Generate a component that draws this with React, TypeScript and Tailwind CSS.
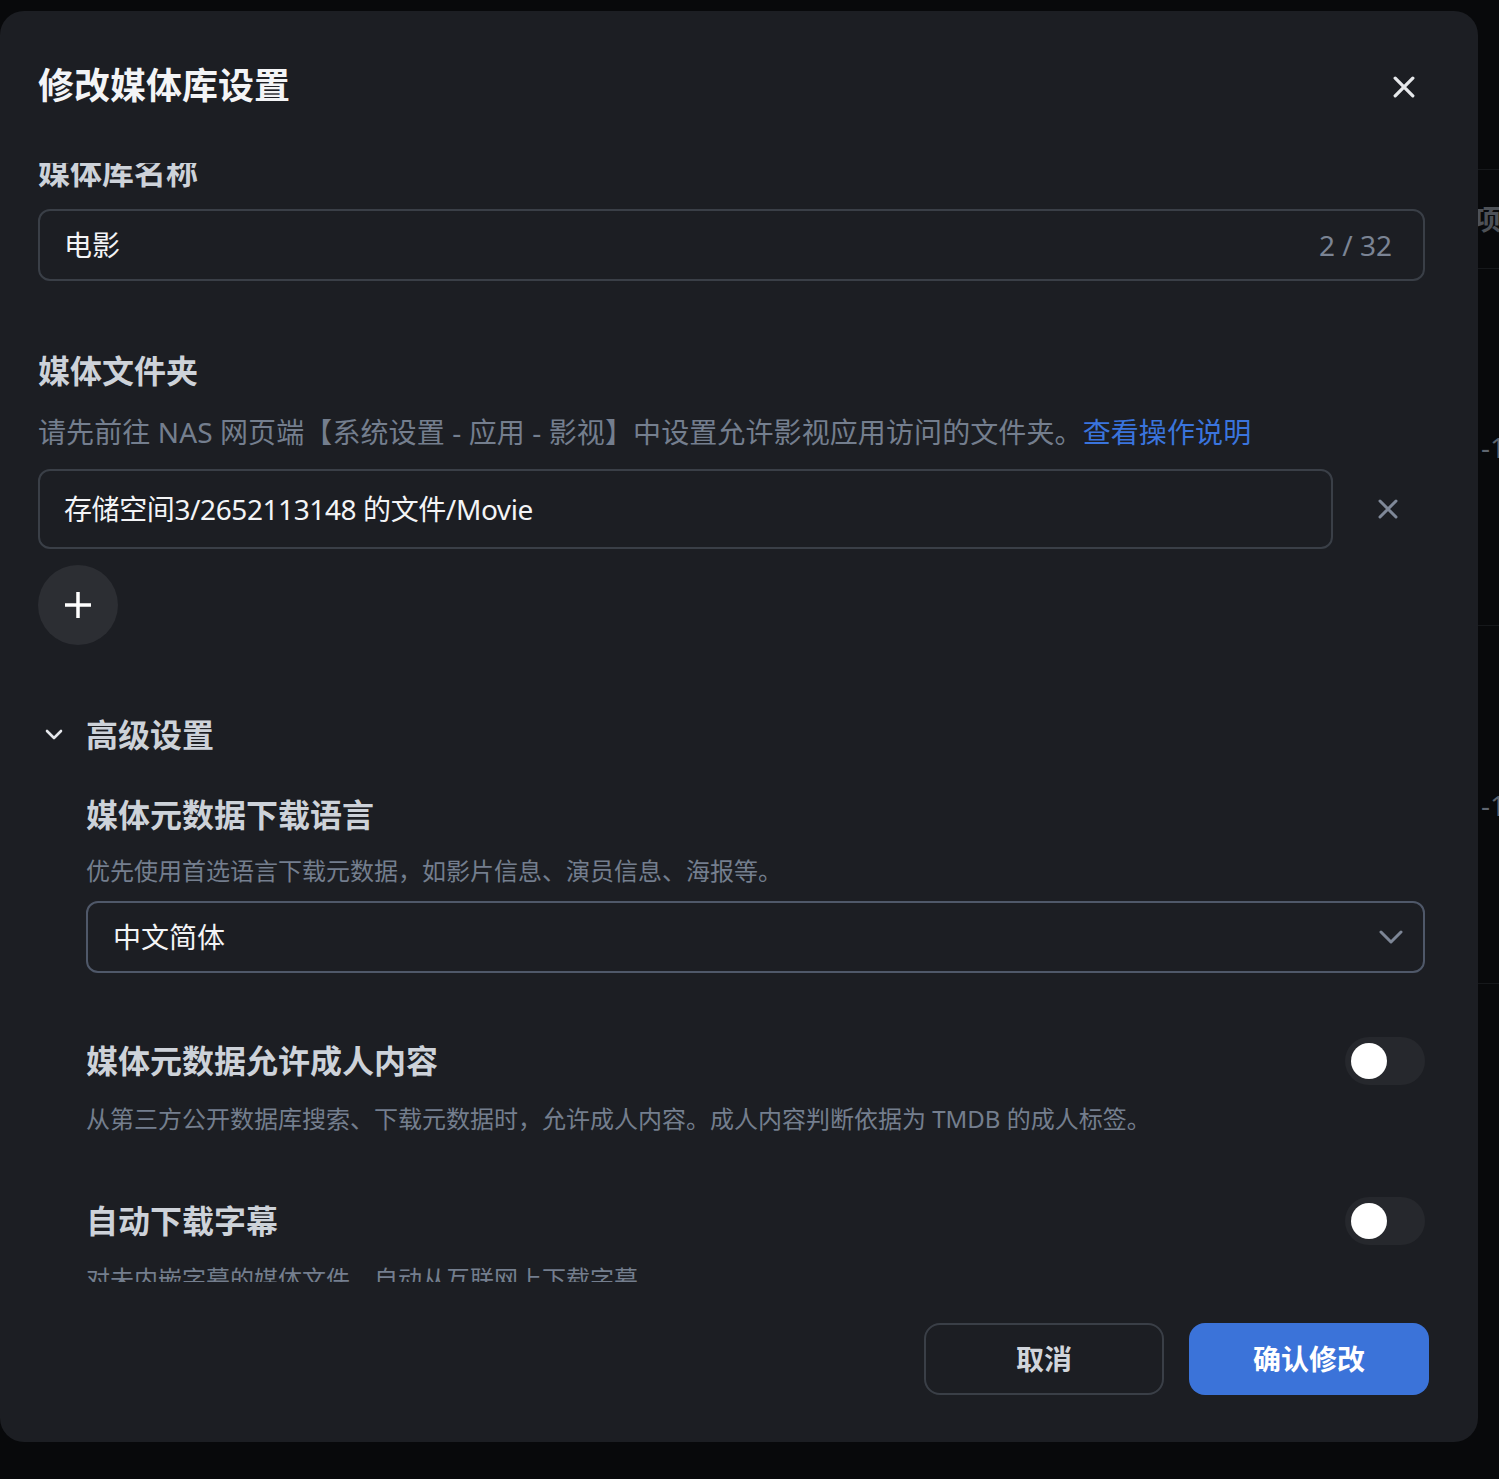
import { useLayoutEffect, useRef, useState } from 'react';

const XIcon = ({ size, stroke, className }: { size: number; stroke: number; className?: string }) => (
    <svg width={size} height={size} viewBox="0 0 20 20" className={className} fill="none">
        <path d="M2 2 L18 18 M18 2 L2 18" stroke="currentColor" strokeWidth={stroke} strokeLinecap="round" />
    </svg>
);

const Toggle = ({ on, onChange }: { on: boolean; onChange: () => void }) => (
    <button
        type="button"
        onClick={onChange}
        className={`w-[80px] h-[48px] rounded-full p-[6px] flex items-center shrink-0 ${on ? 'bg-[#3b73d9] justify-end' : 'bg-[#26282d] justify-start'}`}
    >
        <span className="block size-[36px] rounded-full bg-white" />
    </button>
);

const App = () => {
    const scrollRef = useRef<HTMLDivElement>(null);
    const [adult, setAdult] = useState(false);
    const [subs, setSubs] = useState(false);

    // el panel está desplazado un poco, la etiqueta superior queda cortada
    useLayoutEffect(() => {
        if (scrollRef.current) scrollRef.current.scrollTop = 13;
    }, []);

    return (
        <div className="h-[1479px] bg-[#08090b] flex overflow-hidden font-['Noto_Sans','Noto_Sans_CJK_SC',sans-serif]">
            {/* Modal */}
            <div className="mt-[11px] w-[1478px] h-[1431px] shrink-0 rounded-[24px] bg-[#1c1e23] flex flex-col">
                {/* Header */}
                <div className="h-[152px] shrink-0 flex justify-between items-start pl-[38px] pr-[54px] pt-[51px]">
                    <h1 className="text-[36px] leading-[48px] font-bold text-[#f3f4f6]">修改媒体库设置</h1>
                    <button className="mt-[5px] size-[40px] flex items-center justify-center text-[#e6e8eb]">
                        <XIcon size={22} stroke={3} />
                    </button>
                </div>

                {/* Body */}
                <div ref={scrollRef} className="flex-1 overflow-hidden">
                    <div className="pl-[38px] pr-[53px] pb-[40px]">
                        <div className="text-[32px] leading-[44px] font-bold text-[#cdd2d9]">媒体库名称</div>
                        <div className="mt-[15px] h-[72px] rounded-[12px] border-2 border-[#3a3f47] flex items-center justify-between pl-[24px] pr-[31px]">
                            <span className="text-[28px] text-[#f3f4f6]">电影</span>
                            <span className="text-[28px] text-[#7b8494]">2 / 32</span>
                        </div>

                        <div className="mt-[68px] text-[32px] leading-[44px] font-bold text-[#cdd2d9]">媒体文件夹</div>
                        <p className="mt-[19px] text-[28px] leading-[40px] tracking-[0.1px] text-[#747e8e]">
                            请先前往 NAS 网页端【系统设置 - 应用 - 影视】中设置允许影视应用访问的文件夹。
                            <a href="#" className="text-[#3a74dd]">查看操作说明</a>
                        </p>
                        <div className="mt-[17px] flex items-center gap-[18px]">
                            <div className="flex-1 h-[80px] rounded-[12px] border-2 border-[#3a3f47] flex items-center pl-[24px]">
                                <span className="text-[28px] tracking-[-0.4px] text-[#f3f4f6]">存储空间3/2652113148 的文件/Movie</span>
                            </div>
                            <button className="w-[74px] h-[80px] flex items-center justify-center text-[#7f8898]">
                                <XIcon size={20} stroke={3} />
                            </button>
                        </div>
                        <button className="mt-[16px] size-[80px] rounded-full bg-[#2c2e33] flex items-center justify-center text-white">
                            <svg width="28" height="28" viewBox="0 0 28 28" fill="none">
                                <path d="M14 1 V27 M1 14 H27" stroke="currentColor" strokeWidth="3.5" />
                            </svg>
                        </button>

                        {/* Advanced */}
                        <div className="mt-[68px] h-[44px] flex items-center gap-[16px]">
                            <span className="w-[32px] flex justify-center text-[#e5e7eb]">
                                <svg width="18" height="12" viewBox="0 0 18 12" fill="none">
                                    <path d="M2 2 L9 9 L16 2" stroke="currentColor" strokeWidth="2.6" strokeLinecap="round" strokeLinejoin="round" />
                                </svg>
                            </span>
                            <span className="text-[32px] leading-[44px] font-bold text-[#cdd2d9]">高级设置</span>
                        </div>

                        <div className="pl-[48px]">
                            <div className="mt-[36px] text-[32px] leading-[44px] font-bold text-[#cdd2d9]">媒体元数据下载语言</div>
                            <p className="mt-[16px] text-[24px] leading-[36px] text-[#747e8e]">优先使用首选语言下载元数据，如影片信息、演员信息、海报等。</p>
                            <div className="mt-[12px] h-[72px] rounded-[12px] border-2 border-[#4f5869] flex items-center justify-between pl-[25px] pr-[20px]">
                                <span className="text-[28px] text-[#f3f4f6]">中文简体</span>
                                <svg width="24" height="16" viewBox="0 0 24 16" fill="none" className="text-[#7d8696]">
                                    <path d="M2 3 L12 13 L22 3" stroke="currentColor" strokeWidth="3" strokeLinecap="round" strokeLinejoin="round" />
                                </svg>
                            </div>

                            <div className="mt-[64px] h-[48px] flex items-center justify-between">
                                <span className="text-[32px] leading-[44px] font-bold text-[#cdd2d9]">媒体元数据允许成人内容</span>
                                <Toggle on={adult} onChange={() => setAdult(!adult)} />
                            </div>
                            <p className="mt-[16px] text-[24px] leading-[36px] text-[#747e8e]">从第三方公开数据库搜索、下载元数据时，允许成人内容。成人内容判断依据为 TMDB 的成人标签。</p>

                            <div className="mt-[60px] h-[48px] flex items-center justify-between">
                                <span className="text-[32px] leading-[44px] font-bold text-[#cdd2d9]">自动下载字幕</span>
                                <Toggle on={subs} onChange={() => setSubs(!subs)} />
                            </div>
                            <p className="mt-[16px] text-[24px] leading-[36px] text-[#747e8e]">对未内嵌字幕的媒体文件，自动从互联网上下载字幕</p>
                        </div>
                    </div>
                </div>

                {/* Footer */}
                <div className="h-[160px] shrink-0 flex justify-end items-start gap-[25px] pt-[41px] pr-[49px]">
                    <button className="w-[240px] h-[72px] rounded-[16px] border-2 border-[#3a3f47] text-[28px] font-bold text-[#d1d5db]">取消</button>
                    <button className="w-[240px] h-[72px] rounded-[16px] bg-[#3b73d9] text-[28px] font-bold text-white">确认修改</button>
                </div>
            </div>

            {/* Page behind the modal */}
            <div className="flex-1 overflow-hidden">
                <div className="-ml-[5px] w-[200px]">
                    <div className="h-[169px]" />
                    <div className="h-[99px] border-t border-[#16181b] flex items-center">
                        <span className="text-[28px] font-bold text-[#4d5157]">项目</span>
                    </div>
                    <div className="h-[357px] border-t border-[#16181b] flex items-center pl-[8px]">
                        <span className="text-[28px] text-[#5f6670]">-1</span>
                    </div>
                    <div className="h-[358px] border-t border-[#16181b] flex items-center pl-[8px]">
                        <span className="text-[28px] text-[#5f6670]">-1</span>
                    </div>
                    <div className="h-[400px] border-t border-[#16181b]" />
                </div>
            </div>
        </div>
    );
};

export default App;
